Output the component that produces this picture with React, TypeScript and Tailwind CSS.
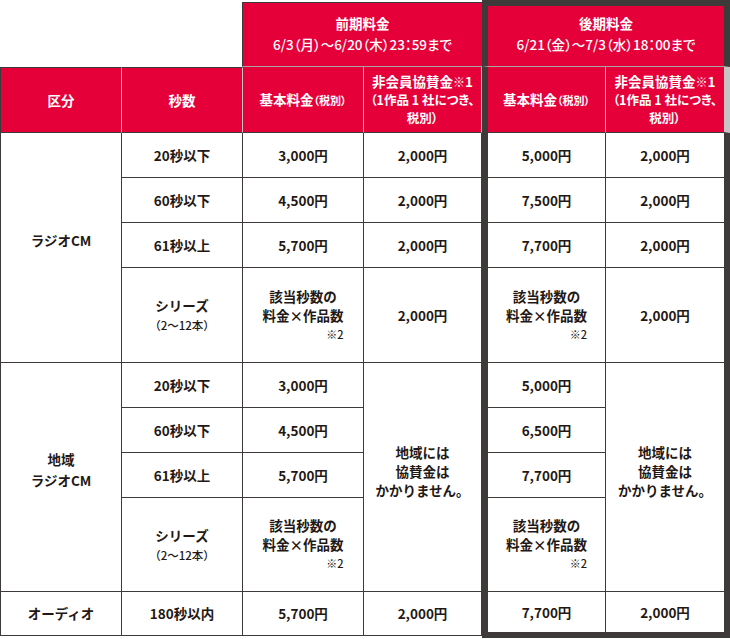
import React from "react";

const hdr =
  "flex items-center justify-center bg-[#e5003a] text-white font-bold text-center border-r border-b border-r-[#c9c3c3] border-b-[#3e3a39]";
const cell =
  "flex items-center justify-center text-center border-r border-b border-[#3e3a39] bg-white";

function Series() {
  return (
    <div className="flex flex-col items-center leading-[20px]">
      <span>シリーズ</span>
      <span className="text-[11.5px] font-medium">（2〜12本）</span>
    </div>
  );
}

function Formula() {
  return (
    <div className="flex flex-col items-center leading-[19px]">
      <span>該当秒数の</span>
      <span>料金×作品数</span>
      <span className="self-end text-[11px] font-medium">※2</span>
    </div>
  );
}

function NoFee() {
  return (
    <div className="flex flex-col items-center leading-[19px] pb-[12px]">
      <span>地域には</span>
      <span>協賛金は</span>
      <span>かかりません。</span>
    </div>
  );
}

function NonMember() {
  return (
    <div className="flex flex-col items-center leading-[18px]">
      <span className="text-[13.5px]">
        非会員協賛金<span className="font-normal text-[12px]">※</span>1
      </span>
      <span className="text-[12.5px] [font-feature-settings:'palt']">（1作品 1 社につき、</span>
      <span className="text-[12.5px] [font-feature-settings:'palt']">税別）</span>
    </div>
  );
}

function Base() {
  return (
    <span className="text-[13.5px]">
      基本料金<span className="text-[11px] [font-feature-settings:'palt']">（税別）</span>
    </span>
  );
}

export default function App() {
  return (
    <div className="w-[730px] h-[639px] bg-white font-['Noto_Sans_CJK_JP',sans-serif] text-[#231815] font-bold text-[13.5px]">
      <div className="grid grid-cols-[122px_121px_121px_118px_124px_124px] grid-rows-[67px_66px_45px_45px_45px_95px_45px_45px_45px_94px_46px]">
        {/* top header */}
        <div className="col-span-2" />
        <div className="col-span-2 mt-[2px] ml-[-1px] flex flex-col items-center justify-center bg-[#e5003a] text-white border-t border-l border-[#3e3a39] border-b border-b-[#a8a3a3] text-[13.5px] leading-[21px] pb-[1px]">
          <span>前期料金</span>
          <span className="font-medium [font-feature-settings:'palt']">6/3（月）〜6/20（木）23：59まで</span>
        </div>
        <div className="col-span-2 flex flex-col items-center justify-center bg-[#e5003a] text-white border-t-[6px] border-x-[6px] border-[#3e3a39] border-b border-b-[#a8a3a3] text-[13.5px] leading-[21px] pb-[5px]">
          <span>後期料金</span>
          <span className="font-medium [font-feature-settings:'palt']">6/21（金）〜7/3（水）18：00まで</span>
        </div>

        {/* header row */}
        <div className={hdr + " border-l border-l-[#3e3a39] border-t border-t-[#3e3a39] text-[13.5px]"}>区分</div>
        <div className={hdr + " border-t border-t-[#3e3a39] text-[13.5px]"}>秒数</div>
        <div className={hdr}>
          <Base />
        </div>
        <div className={hdr}>
          <NonMember />
        </div>
        <div className={hdr + " border-l-[6px] border-l-[#3e3a39]"}>
          <Base />
        </div>
        <div className={hdr + " border-r-[6px] border-r-[#3e3a39]"}>
          <NonMember />
        </div>

        {/* section 1 */}
        <div className={cell + " row-span-4 border-l pb-[14px]"}>ラジオCM</div>
        <div className={cell}>20秒以下</div>
        <div className={cell}>3,000円</div>
        <div className={cell}>2,000円</div>
        <div className={cell + " border-l-[6px]"}>5,000円</div>
        <div className={cell + " border-r-[6px]"}>2,000円</div>

        <div className={cell}>60秒以下</div>
        <div className={cell}>4,500円</div>
        <div className={cell}>2,000円</div>
        <div className={cell + " border-l-[6px]"}>7,500円</div>
        <div className={cell + " border-r-[6px]"}>2,000円</div>

        <div className={cell}>61秒以上</div>
        <div className={cell}>5,700円</div>
        <div className={cell}>2,000円</div>
        <div className={cell + " border-l-[6px]"}>7,700円</div>
        <div className={cell + " border-r-[6px]"}>2,000円</div>

        <div className={cell}>
          <Series />
        </div>
        <div className={cell}>
          <Formula />
        </div>
        <div className={cell}>2,000円</div>
        <div className={cell + " border-l-[6px]"}>
          <Formula />
        </div>
        <div className={cell + " border-r-[6px]"}>2,000円</div>

        {/* section 2 */}
        <div className={cell + " row-span-4 border-l pb-[14px] leading-[21px]"}>
          <div className="flex flex-col items-center">
            <span>地域</span>
            <span>ラジオCM</span>
          </div>
        </div>
        <div className={cell}>20秒以下</div>
        <div className={cell}>3,000円</div>
        <div className={cell + " row-span-4"}>
          <NoFee />
        </div>
        <div className={cell + " border-l-[6px]"}>5,000円</div>
        <div className={cell + " row-span-4 border-r-[6px]"}>
          <NoFee />
        </div>

        <div className={cell}>60秒以下</div>
        <div className={cell}>4,500円</div>
        <div className={cell + " border-l-[6px]"}>6,500円</div>

        <div className={cell}>61秒以上</div>
        <div className={cell}>5,700円</div>
        <div className={cell + " border-l-[6px]"}>7,700円</div>

        <div className={cell}>
          <Series />
        </div>
        <div className={cell}>
          <Formula />
        </div>
        <div className={cell + " border-l-[6px]"}>
          <Formula />
        </div>

        {/* audio */}
        <div className={cell + " h-[44px] self-start border-l"}>オーディオ</div>
        <div className={cell + " h-[44px] self-start"}>180秒以内</div>
        <div className={cell + " h-[44px] self-start"}>5,700円</div>
        <div className={cell + " h-[44px] self-start"}>2,000円</div>
        <div className={cell + " border-l-[6px] border-b-[6px]"}>7,700円</div>
        <div className={cell + " border-r-[6px] border-b-[6px]"}>2,000円</div>
      </div>
    </div>
  );
}
